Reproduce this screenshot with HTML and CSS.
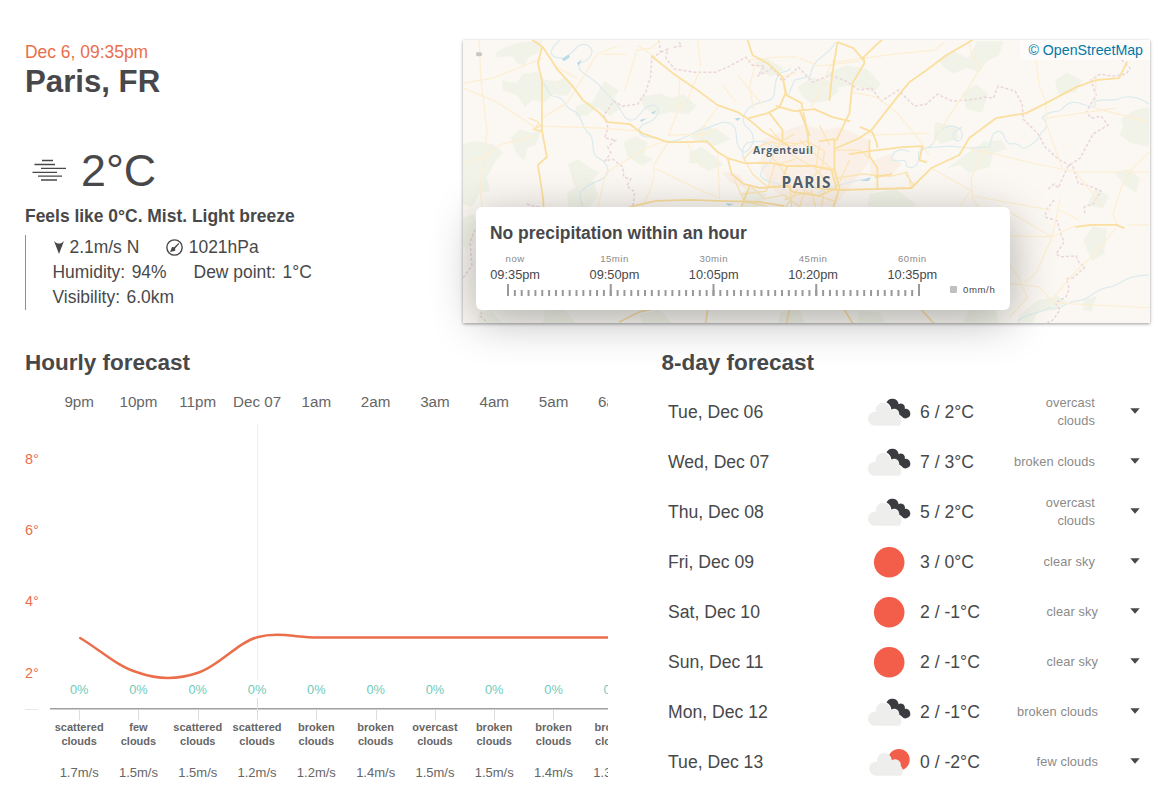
FILE: index.html
```
<!DOCTYPE html>
<html lang="en">
<head>
<meta charset="utf-8">
<title>Paris, FR - Weather</title>
<link rel="stylesheet" href="styles.css">
</head>
<body>
<svg class="defs" width="0" height="0" aria-hidden="true">
  <defs>
    <symbol id="cloud" viewBox="0 0 50 50">
      <path fill="#eeeeed" d="M11 38.700a7 7 0 0 1-.2-14c.5 0 .8 0 1.100.1a7.300 7.300 0 0 1 13.300-5.500c.8 1.200 1.200 2.600 1.300 4a6 6 0 0 1 8.700 2.500l.5 3.400a6.600 6.600 0 0 1-.200 9.500z"/>
    </symbol>
    <symbol id="broken" viewBox="0 0 50 50">
      <use href="#cloud"/>
      <path fill="#3b3c40" d="M22.500 15.600a6.300 6.300 0 0 1 12.100 1.600 4.100 4.100 0 0 1 6.200 4.500 4.800 4.800 0 1 1-3.400 7.300l-2-1.200c-.2-2.400-.7-3.500-1.700-4.600-1.600-1.700-4.400-2-6.400-.6-.2-3-1.700-5.600-4.800-7z"/>
    </symbol>
    <symbol id="clear" viewBox="0 0 50 50"><circle cx="25.200" cy="25.300" r="15.300" fill="#f35e4a"/></symbol>
    <symbol id="few" viewBox="0 0 50 50">
      <circle cx="34.900" cy="22.700" r="10.800" fill="#f35e4a"/>
      <use href="#cloud" x="1.300"/>
    </symbol>
    <symbol id="caret" viewBox="0 0 10 6"><path d="M.3.3h9.400L5 5.700z" fill="#48484a"/></symbol>
  </defs>
</svg>
<main class="page">
  <section class="top">
    <div class="current">
      <div class="date">Dec 6, 09:35pm</div>
      <h1 class="city">Paris, FR</h1>
      <div class="temp-row">
        <svg class="mist" viewBox="24 145 50 50"><path d="M42 160.500h11M34.500 164.500h20.500M41 168.400h25M32.500 172.300H57M38 176.100h24M41 180h16" fill="none" stroke="#48484a" stroke-width="1.300"/></svg>
        <span class="temp">2°C</span>
      </div>
      <div class="feels">Feels like 0°C. Mist. Light breeze</div>
      <ul class="facts">
        <li><svg class="wind" viewBox="0 0 10 13"><path d="M0 0c2 2 3.300 2.500 5 2.500S8 2 10 0L5 13z" fill="#48484a"/></svg>2.1m/s N</li><li><svg class="pressure" viewBox="0 0 16 16"><circle cx="8" cy="8" r="7.200" fill="none" stroke="#48484a" stroke-width="1.300"/><path d="M3.800 12.200l1.900-4.600 2 .2 4-4 .8.700-3.900 4.500.1 2z" fill="#48484a"/></svg>1021hPa</li>
        <li><span class="label">Humidity:</span>94%</li><li><span class="label">Dew point:</span>1°C</li>
        <li><span class="label">Visibility:</span>6.0km</li>
      </ul>
    </div>
    <div class="map">
      <svg class="map-art" viewBox="463 40 688 283">
        <rect x="463" y="40" width="688" height="283" fill="#fbf8f3"/>
        <g fill="#f2f3e8">
          <path d="M495 53l12-7 14-4 22-2-4 12-10 5-5 9-8-4-3-6-16 1zM502 80l15 3 5-9 15-3 7 8 12 2 10-4 7 10-6 9-14-2-8 9-12-3-8 7-8-12-14-5zM463 144l12-3 18 3 10 8-8 10-8 15 3 14-10 2-8 14-9-3zM511 138l9-9 12 4 10-5-6 17-8 3-4 13-8-8zM568 164l10-5 14 10 8 3-7 8 6 16-10 12-20-1-2-14 8-6z"/>
          <path d="M576 106l14-4 8 5-10 8-12 2zM597 93l8-12 14 9-5 8 8 10-12 8-12-8-9 2zM640 97l20-4 12 5 12-4 13 12-8 8-18-2-14 4-12-7zM624 142l12-6 12 7-4 12 10 4-12 7-15-10zM690 152l12-5 14 10 8 8-16 6-10-8-9 0zM755 62l12-4 18 11-12 7-10-3zM798 87l14-10 20 4 8 10-13 10-16 2-8-7zM690 137l14-12 17 6 10 8-16 7-16-4zM742 193l12-6 14 8-10 12-14 2z"/>
          <path d="M828 73l18-8 22 4 14 15-8 8-22-7-18 3zM940 60l14-9 15 7 9-17h26l-4 14-12 6-8 11-12-4-14 5-10-6zM963 93l14-9 12 9-6 20-16-4zM1056 80l12-8 15 8-6 12-18 2zM1122 118l14-8 14-3v40l-18-4-12-8 4-8zM936 122l20 4 4 12-18 6-8-7zM984 142l18-2 6 9-14 4-4 14-20 6-10-8-14 4zM870 194l26-5 18 13 6 14-42 4-10-10zM1115 172l16-3 10 10-4 14-12-8zM1084 240l10-14 14 3-3 25-12 7zM1096 188l14 8-6 12-16-2zM1020 315l18-14 20-5 10 6-15 9-14 1-6 11h-15zM1084 300l14-4-6 16-8-2zM463 218l10-4 4 8-3 22-8 6-3-5z"/>
          <path d="M478 314l12-4 12 13h-24zM545 311l20-2 10 14h-32zM640 315l20-5 12 13h-30zM781 312l20-2 4 13h-26zM860 311l20 2 6 10h-29zM970 310l26-2 4 15h-36z"/>
        </g>
        <g fill="#f9ede1"><path d="M762 140l20-8 22-8 20 6 16-3 28 12 3 22-16 20-20 25h-40l-20-15-14-22z" opacity=".7"/><path d="M870 162l20-8 12 10-12 14-18-4zM722 172l18 2 8 16-18-8z" opacity=".7"/></g>
        <g fill="none" stroke="#dcebee" stroke-width="1.200" stroke-linejoin="round">
          <path d="M560 40c-14 12-10 18 4 18 12-6 13-17 24-13 10 8 0 15-8 18-6 8 12 13 20 23 9 10 19 18 25 31 8 8 14-1 19-8 9-8 20-2 12 8-6 8-15 4-17 14 2 9 16 4 23 9 12 4 20-1 38-10 14-2 18-10 30-7 12 6 2 18 12 28 6 4 10-5 12-10 0-15-12-12-10-23 3-16 16-14 26-18 8-4 3-15 8-23 2-8 12-4 13-9"/>
          <path d="M543 82c8 10 4 14 15 15 8 2 6 8 12 12 14 4 10 18 20 25 6 8 0 17 7 23 10 5 14 13 9 19-8 8-17 5-25 16-4 8 6 16 2 25"/>
          <path d="M746 162c-6-12-2-15 1-19 12-3 27-4 27 11-2 12-13 10-13 22 5 8 19 4 24 14M836 42c-8 16-23 14-25 34l-16 4-6 14M818 193c18-8 32-11 52-15M910 152c-6-5-18-2-18 8 7 3 16-4 15 6 6 4 14 0 12-13 3-6 13-3 16-12 2-12 15-17 22-14 8 3 7 12 2 14-8-2-6-10 4-14M922 148l30-2 18 2 20-1c4-8 0-14 10-16 8 3 2 10 12 13 9-3 8 7 16 3 8-4 12-9 14-14 8-6 6-11 1-15 5-8 16-5 20-9 4-6 12-9 20-5 10 3 14 5 12-2 8-5 16 0 24-3 12-6 26 1 31 5M1018 321c12-8 22-7 32-13 10 4 16-6 28-7 12 0 20-14 34-14 10-3 16-12 38-12"/>
        </g>
        <g fill="#b9dbe7"><path d="M562 59l7-5 1 3-6 4zM577 63l5-4-3 6zM640 120l7-2-5 4zM651 113l6-3-3 4zM735 118l6 0-3 3zM726 203l8 1-5 2zM861 181l11-4-3 4z"/></g>
        <g fill="none" stroke="#ebd5dc" stroke-width="1.500" stroke-dasharray="3 2">
          <path d="M659 40l2 12-9 6-1 18-5 16-8 12-15 2-9-5-6 9-4 5 4 12-3 11 11 2-8 7 3 6-6 8 8-2 10 8 1 10 7 2-4 7 8 6-2 15M661 52l7-3-2 9 9 11 20 3 21 0 14-6 16-9 7 8 12 1-7 10 15-8 10 13 16-14 14 15 18-7 14 5 15 10 12-2 10 13 17-11 16 16 12-2 11-10 15 7 24-2 9-2 8 1 5-12 17 5 7 13 1 15 15 15 7 13 13 12 15 8 5 16 14 4 9 4-8 13-9 3 1 8M1049 189l6-5 4 4 10-22 12-8 7-13 6-11 15-9-7-9-10 2-5-6 10-17-5-15 9-6 12 2 14-2 4-6-7-7-6-8M1055 200l-8 10-1 7 12 4 4 14 3 7-8 12 4 3 16-1 3 7 6 4-12 11-7 1 3 10-3 8-11 6 5 7-8 11-4 1 3 10M674 47l8-1-4-6M527 204l6 2 8 1M463 278l9-12-2-24 5-12M484 307l-4 9 8 7"/>
        </g>
        <g fill="none" stroke="#fdeed2" stroke-width="1.200" stroke-linejoin="round">
          <path d="M479 40l2 40 6 50-2 25-5 30 2 22M463 88l32 13 28 18 14 10M463 83l30-5 50-20M463 163l20-5 19-14 32-8M542 126l60 2 40 3M542 118l25-15 20-32 10-17 20-8M555 66l22 12M602 54l25 0M625 90l12-40 15-2 8-8M638 45l18 12M698 40l3 26M700 70l-10 24-5 15M680 78l-1 30-10 27M668 143l-14 22 0 15-8 20-4 7M655 168l45 22 20 8M688 144l8 14 6 10M598 207l8-34 40-25 22-8M718 107l-16 22 2 12M723 85l14 18M756 62l-6 25 4 22M738 75l25 30M748 60l30-3 20 0M668 135l40-1 10-6M783 77l14-5M718 154l2 45"/>
          <path d="M835 62l60-8 40-4 10-8M800 58l20 8 40-5M838 52l-10 20-8 20-8 15M853 92l24 5 20 15 25 30 8 14M933 144l18-30 18-26 12-20-10-18-1-10M870 135l60-2M963 147l24 5 46 11 44 9 73 0M1037 60l3 25 7 18 0 20 16 45M1047 118l70-10M1097 75l-1 33 54 14M987 148l-15 30 1 20 16 24M932 168l42 24M973 196l78 14M1077 172l4 6 10 12 12 18M1150 152l-18 18-10 18-8 26 4 11M970 192l-12 20-20 10M1150 225h-20M998 205l55 32-16 36-12 10M1007 236l46 1 24-12M1117 228l-20 25-20 18-24 28M1005 283l35 4 14 16 98 5M1000 250l20 28 8 20-18 20M1053 237l8-38M1060 210l20 10"/>
        </g>
        <g fill="none" stroke="#fce5b6" stroke-width="1.300" stroke-linejoin="round">
          <path d="M745 158l10-10 16-6 20 4 16-5 18 10-2 17-12 11-20 8-24-1-14-12-8-14zM765 148l15 18 10 14 2 27M775 165l-8 26-24 3M750 185l15 14 20-4 15 12M758 162l22 2 16-5M775 145l35 20 26 4M800 140l20 18 18 16M820 145l-4 24 14 16M836 150l24 0 10 8M838 178l25-4 12 1M850 160l-10 22M785 200l22-8 30 10M812 190l4 17M826 186l-4 21M806 188l-6 19M798 190l-12 17M735 180l10 22 22 4M870 175l22 1 16-4 4 16M905 172l10 14M820 125l10 20M770 128l12 14 20 2M781 142l14-8M529 118l8 3 4 5-8 3 8 3M539 123l-4 6 8 2"/>
        </g>
        <g fill="none" stroke="#fbdf9f" stroke-width="1.800" stroke-linejoin="round" stroke-linecap="round">
          <path d="M533 40l10 7 8 12 7 11 14 15 11 15 17 13 8 9 22 2 12 9 26 9h20l19-1 11 11 10 6 17 5 27 0 16 3M542 47l-4 16 4 17v50l5 27-9 8 5 32 1 13M748 40l5 15 15 8 15 14 3 16-6 14-12 6-18 5M652 56l21 17 22 15 23 17 20 7 12 8 14 12 24 13M783 77l4 18 15 8 6 30 2 20M777 106l18 5 20-2 18 8 17 4M770 113l13 17 0 10M728 158l4 16 12 10 16 4 30-2M630 207l26-6 34-1 28 1 42 1 24 4M742 206l8-20"/>
          <path d="M973 40l-26 15-20 15-17 12-13 16-25 32-12 8-23 10M837 140l13-27 3-30 12-20-1-6 19-18M864 60l-10-12-16-6-5 30-3 28M861 127l12 5 4 10 1 5M850 154l20-3 33-4 20-1-3 14 7 2M870 140v16l8 12v21M840 190l38-1 34-1 20-20 28-13 10-17 27-20 30-5 20-10 30-16 20-7 23-2 8-16M876 177l16-3M835 140v30l5 18-6 19M800 110l10 25M820 141l15-2M838 190l-22-2M1077 227l15-2 25 0 8 3M788 166l26 0 18 4 5 18-18 8-26-4-10-14z"/>
          <path d="M620 322l20-10 22-5M706 323l2-13M845 310l8 13M922 310l12 13M790 310l-3 13" stroke="#fae0aa"/>
        </g>
        <g class="place"><text x="753.500" y="153.500" font-size="10.500" textLength="60">Argenteuil</text><text x="782" y="188.500" font-size="15.500" textLength="49">PARIS</text></g>
        <rect x="476" y="52" width="6" height="4" rx="1.500" fill="#c9c6c0"/>
      </svg>
      <div class="credit">© OpenStreetMap</div>
      <div class="rain">
        <div class="rain-title">No precipitation within an hour</div>
        <div class="rain-times">
          <div><small>now</small>09:35pm</div><div><small>15min</small>09:50pm</div><div><small>30min</small>10:05pm</div><div><small>45min</small>10:20pm</div><div><small>60min</small>10:35pm</div>
        </div>
        <div class="rain-scale">
          <svg class="ticks" viewBox="0 0 414 12" fill="none" stroke="#999"><path d="M0 9h413" stroke-width="6" stroke-dasharray="2 4.850"/><path d="M0 6h413" stroke-width="12" stroke-dasharray="2 100.750"/></svg>
          <span class="swatch"></span><span class="rate">0mm/h</span>
        </div>
      </div>
    </div>
  </section>
  <section class="bottom">
    <div class="hourly">
      <h2>Hourly forecast</h2>
      <div class="chart">
        <div class="scale"><span>8°</span><span>6°</span><span>4°</span><span>2°</span><i></i></div>
        <div class="hours">
          <svg class="curve" viewBox="50 390 558 360" fill="none">
            <path d="M257.500 424v256" stroke="#eee"/>
            <path d="M50 708.700h558" stroke="#a0a0a0" stroke-width="1.400"/>
            <path d="M79.500 710v10.500M138.500 710v10.500M198.500 710v10.500M257.500 698v22.500M316.500 710v10.500M376.500 710v10.500M435.500 710v10.500M494.500 710v10.500M553.500 710v10.500" stroke="#ddd"/>
            <path d="M79.300 637.500C99 649 119 668 138.600 672.700 158 679.600 178 679.600 198 672.700 218 667 238 642 257.200 637.300 277 631.500 297 637.500 316.500 637.500H608" stroke="#eb6e4b" stroke-width="2.500"/>
          </svg>
          <div class="hour"><b>9pm</b><em>0%</em><strong>scattered clouds</strong><span>1.7m/s</span></div>
          <div class="hour"><b>10pm</b><em>0%</em><strong>few<br>clouds</strong><span>1.5m/s</span></div>
          <div class="hour"><b>11pm</b><em>0%</em><strong>scattered clouds</strong><span>1.5m/s</span></div>
          <div class="hour"><b>Dec 07</b><em>0%</em><strong>scattered clouds</strong><span>1.2m/s</span></div>
          <div class="hour"><b>1am</b><em>0%</em><strong>broken clouds</strong><span>1.2m/s</span></div>
          <div class="hour"><b>2am</b><em>0%</em><strong>broken clouds</strong><span>1.4m/s</span></div>
          <div class="hour"><b>3am</b><em>0%</em><strong>overcast clouds</strong><span>1.5m/s</span></div>
          <div class="hour"><b>4am</b><em>0%</em><strong>broken clouds</strong><span>1.5m/s</span></div>
          <div class="hour"><b>5am</b><em>0%</em><strong>broken clouds</strong><span>1.4m/s</span></div>
          <div class="hour"><b>6am</b><em>0%</em><strong>broken clouds</strong><span>1.3m/s</span></div>
        </div>
      </div>
    </div>
    <div class="daily">
      <h2>8-day forecast</h2>
      <ul class="days">
        <li><span class="day">Tue, Dec 06</span><svg class="icon"><use href="#broken"/></svg><span class="range">6 / 2°C</span><span class="desc">overcast<br>clouds</span><svg class="caret"><use href="#caret"/></svg></li>
        <li><span class="day">Wed, Dec 07</span><svg class="icon"><use href="#broken"/></svg><span class="range">7 / 3°C</span><span class="desc">broken clouds</span><svg class="caret"><use href="#caret"/></svg></li>
        <li><span class="day">Thu, Dec 08</span><svg class="icon"><use href="#broken"/></svg><span class="range">5 / 2°C</span><span class="desc">overcast<br>clouds</span><svg class="caret"><use href="#caret"/></svg></li>
        <li><span class="day">Fri, Dec 09</span><svg class="icon"><use href="#clear"/></svg><span class="range">3 / 0°C</span><span class="desc">clear sky</span><svg class="caret"><use href="#caret"/></svg></li>
        <li class="cold"><span class="day">Sat, Dec 10</span><svg class="icon"><use href="#clear"/></svg><span class="range">2 / -1°C</span><span class="desc">clear sky</span><svg class="caret"><use href="#caret"/></svg></li>
        <li class="cold"><span class="day">Sun, Dec 11</span><svg class="icon"><use href="#clear"/></svg><span class="range">2 / -1°C</span><span class="desc">clear sky</span><svg class="caret"><use href="#caret"/></svg></li>
        <li class="cold"><span class="day">Mon, Dec 12</span><svg class="icon"><use href="#broken"/></svg><span class="range">2 / -1°C</span><span class="desc">broken clouds</span><svg class="caret"><use href="#caret"/></svg></li>
        <li class="cold"><span class="day">Tue, Dec 13</span><svg class="icon"><use href="#few"/></svg><span class="range">0 / -2°C</span><span class="desc">few clouds</span><svg class="caret"><use href="#caret"/></svg></li>
      </ul>
    </div>
  </section>
</main>
</body>
</html>
```
FILE: styles.css
```
* { box-sizing: border-box; }
body {
  margin: 0;
  background: #fff;
  color: #48484a;
  font-family: "Liberation Sans", Arial, sans-serif;
  font-size: 17.6px;
}
ul { list-style: none; margin: 0; padding: 0; }
.defs { position: absolute; }
.page { height: 799px; padding: 40px 8px 0 25px; overflow: hidden; }
.top { display: flex; height: 283px; }
.current { width: 438px; padding-top: 2px; font-size: 17.45px; }
.date { color: #eb6e4b; line-height: 20px; }
.city { margin: 2px 0 0; font-size: 31.200px; line-height: 36px; }
.temp-row { display: flex; align-items: center; margin: 45px 0 0 -1px; height: 50px; }
.mist { width: 50px; height: 50px; margin-right: 7px; }
.temp { font-size: 44.8px; line-height: 50px; }
.feels { margin-top: 11px; font-weight: bold; line-height: 20px; }
.facts { width: 330px; margin-top: 9px; padding-left: 26.500px; border-left: 1px solid #eb6e4b; line-height: 25px; display: flex; flex-wrap: wrap; column-gap: 27px; }
.facts li:last-child { flex-basis: 100%; }
.facts li { display: flex; align-items: center; }
.label { margin-right: 6.500px; }
.wind { width: 10px; height: 13px; margin: 0 6px 0 1px; }
.pressure { width: 17px; height: 17px; margin-right: 5.500px; }

.map {
  position: relative;
  width: 687px;
  height: 283px;
  box-shadow: 0 1px 3px rgba(0, 0, 0, .4);
}
.map-art { display: block; width: 687px; height: 283px; }
.place { fill: #525f6c; font-family: "Open Sans", Inter, sans-serif; font-weight: 700; paint-order: stroke; stroke: #fff; stroke-width: 1px; }
.credit {
  position: absolute;
  top: 0;
  right: 0;
  height: 20px;
  padding: 0 7px 0 8px;
  background: rgba(255, 255, 255, .6);
  color: #0078a8;
  font-size: 14.200px;
  line-height: 20px;
}
.rain {
  position: absolute;
  left: 13px;
  top: 167px;
  width: 534px;
  height: 103px;
  padding: 16px 14px 0;
  border-radius: 6px;
  background: #fff;
  box-shadow: 0 10px 45px rgba(0, 0, 0, .3);
}
.rain-title { font-size: 17.450px; font-weight: bold; line-height: 20px; }
.rain-times { display: flex; gap: 49px; margin-top: 8px; font-size: 12.8px; line-height: 15px; }
.rain-times div { width: 50.300px; text-align: center; white-space: nowrap; }
.rain-times small { display: block; font-size: 9.6px; line-height: 16px; color: #8a8a8a; letter-spacing: .5px; }
.rain-scale { display: flex; margin: 2px 0 0 17px; height: 12px; }
.ticks { width: 414px; height: 12px; }
.swatch { width: 7px; height: 7px; margin: 2px 6px 0 29px; border-radius: 1px; background: #c0c0c0; }
.rate { font-size: 9.6px; line-height: 12px; letter-spacing: .6px; }

.bottom { display: flex; padding-top: 26px; }
h2 { margin: 0; font-size: 22.5px; line-height: 27px; }
.hourly { width: 583px; }
.chart { display: flex; height: 423px; }
.scale { width: 25px; padding-top: 48px; font-size: 14.4px; color: #eb6e4b; line-height: 71.200px; }
.scale span { display: block; }
.scale i { display: block; width: 13px; height: 1px; margin-top: 0; background: #e8e8e8; }
.hours { position: relative; flex: 1; display: grid; grid-template-columns: repeat(10, 59.300px); overflow: hidden; color: #666; text-align: center; }
.curve { position: absolute; left: 0; top: 14px; width: 558px; height: 360px; }
.hour { position: relative; left: -.5px; display: flex; flex-direction: column; }
.hour b { margin-top: 17px; font-size: 15.2px; font-weight: normal; line-height: 18px; }
.hour em { margin-top: 270px; font-size: 12.800px; font-style: normal; line-height: 18px; color: #6fcbbb; }
.hour strong { margin-top: 21px; font-size: 11px; line-height: 14px; }
.hour span { margin-top: 16px; font-size: 13px; line-height: 18px; }

.daily { width: 489px; margin-left: 53px; }
.daily h2 { padding-left: .5px; }
.days { padding: 11px 0 0 7px; }
.days li { display: flex; align-items: center; height: 50px; }
.day { width: 196px; }
.icon { width: 50px; height: 50px; margin-right: 6px; }
.range { width: 70px; white-space: nowrap; }
.desc { width: 105px; text-align: right; font-size: 12.800px; line-height: 18px; color: #8a8a8a; letter-spacing: .1px; }
.cold .desc { width: 108px; }
.caret { width: 10px; height: 6px; margin: -3px 0 0 35px; }
.cold .caret { margin-left: 32px; }
```
